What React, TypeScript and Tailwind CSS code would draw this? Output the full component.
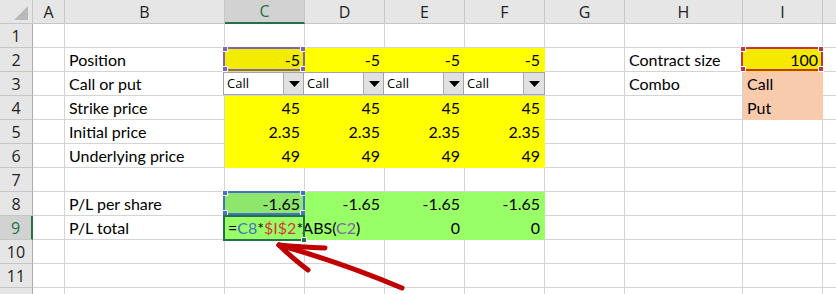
import React from 'react';

type Cell = {
  text?: React.ReactNode;
  align?: 'left' | 'right';
  bg?: string;
  extra?: React.ReactNode;
};

const widths = [
  'w-[32px]',
  'w-[160px]',
  'w-[80px]',
  'w-[80px]',
  'w-[80px]',
  'w-[80px]',
  'w-[80px]',
  'w-[118px]',
  'w-[80px]',
];
const headers = ['A', 'B', 'C', 'D', 'E', 'F', 'G', 'H', 'I'];

const YELLOW = 'bg-[#ffff00] border-[#ffff00]';
const YELLOW_SEL = 'bg-[#f2ec00] border-[#f2ec00]';
const GREEN = 'bg-[#99ff66] border-[#99ff66]';
const GREEN_SEL = 'bg-[#8ee76c] border-[#8ee76c]';
const PEACH = 'bg-[#f8cbad] border-[#f8cbad]';

const Corners: React.FC<{ color: string }> = ({ color }) => (
  <>
    <span className={`absolute -left-[3px] -top-[3px] w-[6px] h-[6px] border border-white ${color}`} />
    <span className={`absolute -right-[3px] -top-[3px] w-[6px] h-[6px] border border-white ${color}`} />
    <span className={`absolute -left-[3px] -bottom-[3px] w-[6px] h-[6px] border border-white ${color}`} />
    <span className={`absolute -right-[3px] -bottom-[3px] w-[6px] h-[6px] border border-white ${color}`} />
  </>
);

// coloured outline Excel draws round cells that a formula refers to
const RefBox: React.FC<{ border: string; fill: string }> = ({ border, fill }) => (
  <div className={`absolute -left-[2px] -top-[1px] w-[82px] h-[24px] border-2 ${border} pointer-events-none`}>
    <Corners color={fill} />
  </div>
);

const Dropdown: React.FC = () => (
  <div className="absolute -left-[2px] top-0 w-[82px] h-[23px] flex border border-[#a3a3a3] bg-white z-10">
    <span className="flex-1 pl-[3px] text-[13px] leading-[21px] text-black font-['Open_Sans',sans-serif]">Call</span>
    <span className="w-[21px] h-full bg-[#e1e1e1] border-l border-[#adadad] flex items-center justify-center">
      <svg width="11" height="6" viewBox="0 0 11 6">
        <path d="M0 0 H11 L5.5 6 Z" fill="#000" />
      </svg>
    </span>
  </div>
);

const n = (v: string, bg: string, extra?: React.ReactNode): Cell => ({ text: v, align: 'right', bg, extra });
const l = (v: string): Cell => ({ text: v });

const formula = (
  <span>
    =<span className="text-[#4472c4]">C8</span>*<span className="text-[#d03a3a]">$I$2</span>*ABS(
    <span className="text-[#8064a2]">C2</span>)
  </span>
);

const rows: Record<number, Record<number, Cell>> = {
  2: {
    1: l('Position'),
    2: n('-5', YELLOW_SEL, <RefBox border="border-[#7e63b8]" fill="bg-[#7e63b8]" />),
    3: n('-5', YELLOW),
    4: n('-5', YELLOW),
    5: n('-5', YELLOW),
    7: l('Contract size'),
    8: n('100', 'bg-[#f5e900] border-[#f5e900]', <RefBox border="border-[#c4343f]" fill="bg-[#c4343f]" />),
  },
  3: {
    1: l('Call or put'),
    2: { extra: <Dropdown /> },
    3: { extra: <Dropdown /> },
    4: { extra: <Dropdown /> },
    5: { extra: <Dropdown /> },
    7: l('Combo'),
    8: { text: 'Call', bg: PEACH },
  },
  4: {
    1: l('Strike price'),
    2: n('45', YELLOW),
    3: n('45', YELLOW),
    4: n('45', YELLOW),
    5: n('45', YELLOW),
    8: { text: 'Put', bg: PEACH },
  },
  5: {
    1: l('Initial price'),
    2: n('2.35', YELLOW),
    3: n('2.35', YELLOW),
    4: n('2.35', YELLOW),
    5: n('2.35', YELLOW),
  },
  6: {
    1: l('Underlying price'),
    2: n('49', YELLOW),
    3: n('49', YELLOW),
    4: n('49', YELLOW),
    5: n('49', YELLOW),
  },
  8: {
    1: l('P/L per share'),
    2: n('-1.65', GREEN_SEL, <RefBox border="border-[#4472c4]" fill="bg-[#4472c4]" />),
    3: n('-1.65', GREEN),
    4: n('-1.65', GREEN),
    5: n('-1.65', GREEN),
  },
  9: {
    1: l('P/L total'),
    2: {
      text: formula,
      bg: GREEN,
      extra: (
        <div className="absolute -left-[2px] -top-[1px] w-[82px] h-[26px] border-2 border-[#217346] pointer-events-none">
          <span className="absolute -right-[4px] -bottom-[4px] w-[6px] h-[6px] bg-[#217346] border border-white" />
        </div>
      ),
    },
    3: { bg: GREEN },
    4: n('0', GREEN),
    5: n('0', GREEN),
  },
};

export default function App() {
  return (
    <div className="relative w-[836px] h-[294px] overflow-hidden bg-white font-['Lato',sans-serif] text-[16px] text-black">
      {/* column headers */}
      <div className="flex h-[24px]">
        <div className="relative w-[33px] h-full bg-[#e6e6e6] border-r border-b border-[#c6c6c6] flex items-end justify-end pr-[4px] pb-[3px]">
          <svg width="14" height="14" viewBox="0 0 14 14">
            <path d="M14 0 V14 H0 Z" fill="#b9b9b9" />
          </svg>
        </div>
        {headers.map((h, i) => (
          <div
            key={h}
            className={`${widths[i]} h-full flex items-center justify-center border-r font-['Open_Sans',sans-serif] text-[16px] ${
              h === 'C'
                ? 'bg-[#d2d2d2] text-[#217346] border-b-2 border-b-[#217346] border-r-[#c6c6c6]'
                : 'bg-[#e6e6e6] text-[#222] border-b border-[#c6c6c6]'
            }`}
          >
            {h}
          </div>
        ))}
        <div className="flex-1 h-full bg-[#e6e6e6] border-b border-[#c6c6c6]" />
      </div>

      {Array.from({ length: 12 }, (_, r) => r + 1).map((r) => {
        const row = rows[r] || {};
        return (
          <div key={r} className="flex h-[24px]">
            <div
              className={`w-[33px] h-full flex items-center justify-center font-['Open_Sans',sans-serif] text-[16px] border-b border-[#c6c6c6] ${
                r === 9
                  ? 'bg-[#d2d2d2] text-[#217346] border-r-2 border-r-[#217346]'
                  : 'bg-[#e6e6e6] text-[#222] border-r border-r-[#ababab]'
              }`}
            >
              {r < 12 ? r : ''}
            </div>
            {widths.map((w, c) => {
              const cell = row[c];
              const bg = cell?.bg ?? 'bg-white border-[#d4d4d4]';
              return (
                <div
                  key={c}
                  className={`relative ${w} h-full border-r border-b ${bg} flex items-center px-[4px] whitespace-nowrap ${
                    cell?.align === 'right' ? 'justify-end' : 'justify-start'
                  } ${c === 2 && r === 9 ? 'z-10' : ''}`}
                >
                  {cell?.text && <span className={c === 2 && r === 9 ? '-ml-[1px]' : ''}>{cell.text}</span>}
                  {cell?.extra}
                </div>
              );
            })}
            <div className="flex-1 h-full border-b border-[#d4d4d4]" />
          </div>
        );
      })}

      {/* annotation arrow */}
      <svg className="absolute inset-0 pointer-events-none z-20" width="836" height="294">
        <g stroke="#c00000" strokeWidth="5" strokeLinecap="round" fill="none">
          <path d="M402 288 Q340 262 279 245" />
          <path d="M279 245 Q300 247 325 248" />
          <path d="M279 245 Q292 258 308 270" />
        </g>
      </svg>
    </div>
  );
}
